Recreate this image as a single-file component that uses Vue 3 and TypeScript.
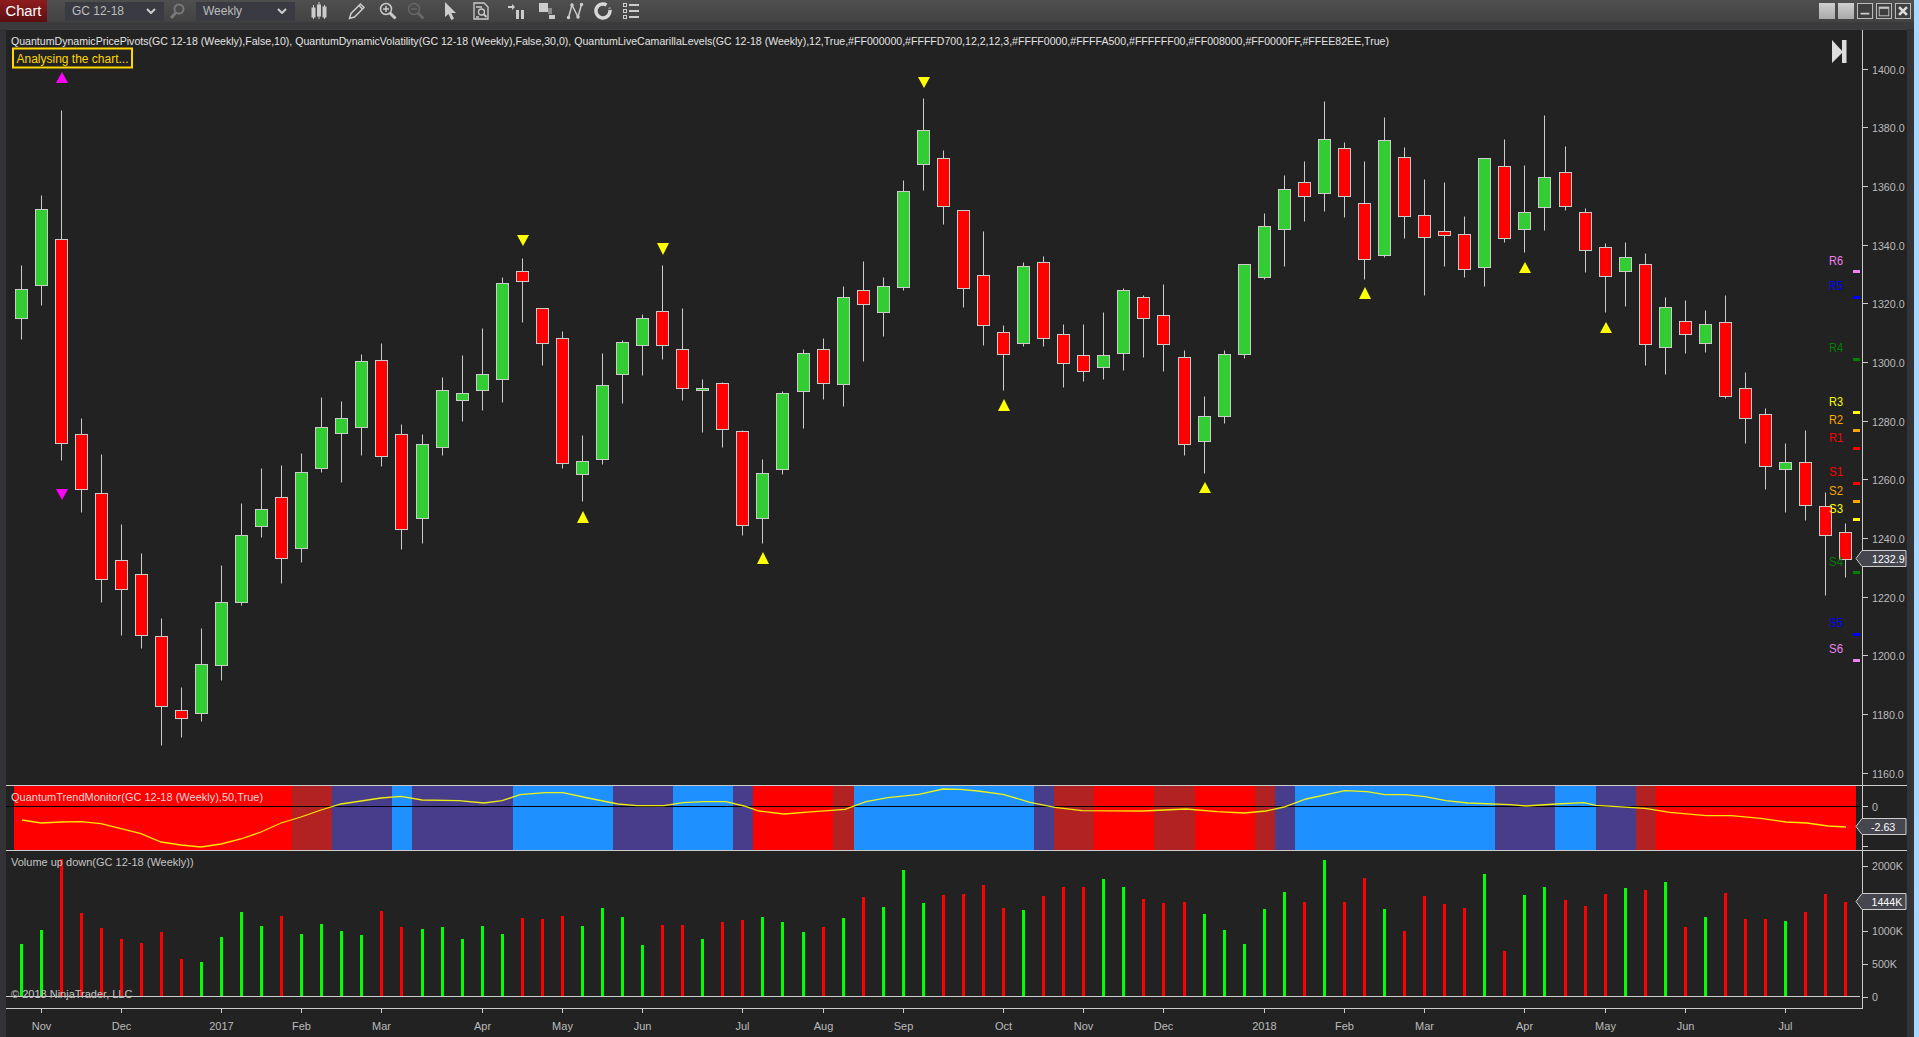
<script setup lang="ts">
type Reading = [number, number, number, number, "G" | "R"];

const slotGaps = [20, 39, 58, 77];
const slotX = (i: number) => 21.5 + 20 * i + slotGaps.filter((g) => i >= g).length;
const snap = (v: number) => Math.round(v) + 0.5;

// candle rows were read off crops of the chart: screen y = top + v / scale
function fromCrop(rows: Reading[], top: number, scale: number) {
    return rows.map(([wt, bt, bb, wb, dir]) => ({
        wickTop: snap(top + wt / scale),
        bodyTop: snap(top + bt / scale),
        bodyBottom: snap(top + bb / scale),
        wickBottom: snap(top + wb / scale),
        dir,
    }));
}

const candles = [
    ...fromCrop([
        [459, 514, 579, 625, "G"], [302, 333, 505, 549, "G"], [112, 400, 859, 897, "R"], [802, 837, 962, 1012, "R"],
        [883, 971, 1162, 1214, "R"], [1039, 1121, 1184, 1288, "R"], [1104, 1152, 1287, 1317, "R"], [1250, 1291, 1448, 1534, "R"],
        [1404, 1457, 1473, 1516, "R"], [1272, 1354, 1462, 1481, "G"], [1131, 1213, 1356, 1389, "G"], [992, 1063, 1215, 1221, "G"],
        [914, 1005, 1043, 1068, "G"], [907, 978, 1115, 1172, "R"], [880, 922, 1092, 1124, "G"], [755, 823, 915, 923, "G"],
        [764, 803, 835, 945, "G"], [659, 675, 821, 885, "G"], [634, 673, 886, 909, "R"], [815, 837, 1050, 1095, "R"],
        [838, 861, 1027, 1082, "G"], [710, 740, 868, 885, "G"], [661, 745, 761, 809, "G"],
    ], 60, 2.24),
    ...fromCrop([
        [778, 913, 959, 1016, "G"], [630, 649, 927, 993, "G"], [575, 614, 643, 761, "R"], [721, 721, 821, 886, "R"],
        [787, 808, 1171, 1185, "R"], [1089, 1165, 1203, 1281, "G"], [851, 945, 1160, 1173, "G"], [813, 820, 913, 996, "G"],
        [738, 750, 829, 915, "G"], [595, 730, 827, 868, "R"], [720, 840, 953, 987, "R"], [926, 953, 959, 1080, "G"],
        [935, 939, 1072, 1124, "R"], [1074, 1078, 1351, 1379, "R"], [1159, 1200, 1331, 1402, "G"], [961, 968, 1189, 1202, "G"],
        [839, 852, 962, 1069, "G"], [807, 840, 939, 984, "R"], [656, 689, 942, 1005, "G"], [584, 669, 710, 874, "R"],
        [630, 657, 733, 801, "G"], [348, 381, 660, 668, "G"], [110, 204, 303, 377, "G"], [261, 286, 425, 476, "R"],
    ], 60, 2.904),
    ...fromCrop([
        [451, 451, 683, 741, "R"], [513, 646, 794, 855, "R"], [795, 817, 881, 990, "R"], [605, 619, 848, 858, "G"],
        [588, 607, 833, 858, "R"], [792, 823, 908, 981, "R"], [792, 886, 932, 963, "R"], [756, 886, 920, 957, "G"],
        [685, 691, 878, 930, "G"], [705, 712, 773, 891, "R"], [672, 766, 851, 933, "R"], [870, 892, 1151, 1185, "R"],
        [1008, 1069, 1142, 1239, "G"], [870, 883, 1067, 1089, "G"], [613, 613, 881, 894, "G"], [459, 499, 650, 657, "G"],
        [345, 388, 506, 618, "G"], [303, 367, 407, 483, "R"], [123, 238, 398, 453, "G"], [246, 265, 407, 471, "R"],
        [303, 430, 596, 657, "R"], [171, 241, 584, 591, "G"], [261, 292, 467, 534, "R"], [357, 466, 530, 705, "R"],
    ], 60, 3),
    ...fromCrop([
        [296, 439, 449, 540, "R"], [395, 448, 548, 572, "R"], [227, 227, 542, 598, "G"], [171, 251, 458, 470, "R"],
        [247, 384, 432, 499, "G"], [102, 283, 368, 436, "G"], [192, 268, 365, 377, "R"], [372, 384, 493, 558, "R"],
        [473, 486, 568, 674, "R"], [470, 515, 554, 656, "G"], [502, 535, 766, 828, "R"], [630, 660, 774, 854, "G"],
        [639, 701, 739, 793, "R"], [668, 710, 763, 790, "G"], [624, 704, 917, 923, "R"], [848, 895, 983, 1054, "R"],
        [952, 971, 1120, 1188, "R"], [1054, 1110, 1131, 1254, "G"], [1016, 1110, 1233, 1278, "R"], [1197, 1236, 1320, 1495, "R"],
        [1287, 1313, 1390, 1443, "R"],
    ], 80, 2.904),
].map((c, i) => ({ ...c, x: slotX(i) }));

const priceTicks = [1400, 1380, 1360, 1340, 1320, 1300, 1280, 1260, 1240, 1220, 1200, 1180, 1160].map((p) => ({
    label: p.toFixed(1),
    y: snap(68.6 + ((1400 - p) / 20) * 58.67),
}));

const pivots = [
    { name: "R6", color: "#ee82ee", labelY: 260, tickY: 271 },
    { name: "R5", color: "#0000ff", labelY: 285, tickY: 297 },
    { name: "R4", color: "#008000", labelY: 347, tickY: 359 },
    { name: "R3", color: "#ffff00", labelY: 401, tickY: 412 },
    { name: "R2", color: "#ffa500", labelY: 419, tickY: 430 },
    { name: "R1", color: "#ff0000", labelY: 437, tickY: 448 },
    { name: "S1", color: "#ff0000", labelY: 471, tickY: 483 },
    { name: "S2", color: "#ffa500", labelY: 490, tickY: 501 },
    { name: "S3", color: "#ffff00", labelY: 508, tickY: 519 },
    { name: "S4", color: "#008000", labelY: 561, tickY: 572 },
    { name: "S5", color: "#0000ff", labelY: 622, tickY: 634 },
    { name: "S6", color: "#ee82ee", labelY: 648, tickY: 660 },
];

const triangle = (x: number, top: number, bottom: number, up: boolean) =>
    up ? `${x - 6},${bottom} ${x + 6},${bottom} ${x},${top}` : `${x - 6},${top} ${x + 6},${top} ${x},${bottom}`;

const markers = [
    { color: "#ff00ff", points: triangle(62, 72, 83, true) },
    { color: "#ff00ff", points: triangle(62, 489, 500, false) },
    { color: "#ffff00", points: triangle(523, 235, 246, false) },
    { color: "#ffff00", points: triangle(663, 243, 255, false) },
    { color: "#ffff00", points: triangle(924, 77, 88, false) },
    { color: "#ffff00", points: triangle(583, 511, 523, true) },
    { color: "#ffff00", points: triangle(763, 552, 564, true) },
    { color: "#ffff00", points: triangle(1004, 399, 411, true) },
    { color: "#ffff00", points: triangle(1205, 482, 493, true) },
    { color: "#ffff00", points: triangle(1365, 287, 299, true) },
    { color: "#ffff00", points: triangle(1525, 262, 273, true) },
    { color: "#ffff00", points: triangle(1606, 322, 333, true) },
];

const RED = "#ff0000";
const BRICK = "#b22222";
const SLATE = "#483d8b";
const BLUE = "#1e90ff";
const trendStops: [number, string][] = [
    [14, RED], [292, BRICK], [332, SLATE], [392, BLUE], [412, SLATE], [513, BLUE], [613, SLATE], [673, BLUE],
    [733, SLATE], [753, RED], [833, BRICK], [854, BLUE], [1034, SLATE], [1054, BRICK], [1094, RED], [1154, BRICK],
    [1195, RED], [1255, BRICK], [1275, SLATE], [1295, BLUE], [1495, SLATE], [1555, BLUE], [1596, SLATE], [1636, BRICK],
    [1656, RED],
];
const trendBands = trendStops.map(([x, color], i) => ({
    x,
    color,
    width: (trendStops[i + 1]?.[0] ?? 1856) - x,
}));

const trendLine = [
    [22, 820], [41, 823], [61, 822], [81, 821.7], [101, 823.7], [121, 828.7], [141, 833.7], [161, 842], [181, 845],
    [201, 847], [221, 844], [241, 839], [261, 832], [281, 823], [301, 817], [321, 810], [341, 804], [361, 801],
    [381, 798], [401, 796.3], [422, 800], [459, 800.7], [484, 803], [502, 800.7], [520, 794.7], [545, 792.7],
    [563, 792.7], [588, 798], [618, 804], [637, 805.7], [664, 805.7], [683, 802.7], [704, 801.7], [726, 801.7],
    [744, 806], [759, 811], [784, 814], [814, 811.7], [845, 809.3], [866, 801.7], [888, 797.7], [919, 794.3],
    [943, 789], [960, 789.3], [978, 791], [1003, 794.3], [1030, 802.3], [1055, 807.3], [1082, 810.7], [1143, 811],
    [1186, 809], [1217, 811.7], [1244, 813], [1266, 811], [1284, 807], [1306, 799], [1345, 790.7], [1367, 791.7],
    [1385, 794.7], [1406, 794.7], [1425, 796.7], [1446, 800.7], [1468, 803], [1510, 804.7], [1526, 806], [1556, 804],
    [1584, 802.7], [1596, 805.3], [1617, 806.7], [1645, 808.3], [1670, 812.3], [1706, 815.7], [1731, 815.7],
    [1761, 818.3], [1786, 822], [1807, 823], [1828, 826], [1846, 827],
].map(([x, y]) => `${x},${y}`).join(" ");

const volumeTops = [
    944, 930, 859, 913, 928, 939, 943, 932, 959, 962, 937, 912, 926, 916, 934, 924, 931, 935, 911, 927, 929, 927, 939, 926,
    934, 918, 919, 916, 926, 908, 917, 945, 925, 925, 939, 922, 920, 917, 922, 932, 927, 918, 897, 907,
    870, 903, 895, 894, 885, 908, 910, 896, 887, 887, 879, 887, 899, 903, 902, 914, 930, 944, 909, 892,
    902, 860, 902, 878, 909, 931, 896, 904, 908, 874, 951, 895, 887, 900, 906, 894,
    888, 890, 882, 927, 917, 893, 919, 919, 921, 912, 894, 902,
];
const volumeDirs =
    "GGRRRRRRRGGGGRGGGGRRGGGG" + "GRRRGGGGRR" + "GRRGGGRGRG" + "GGRRRRGRRR" + "GGRRRGGGGG" + "RGRRGRRRRG" + "RGGRRR" + "GRGRGRRRGRRR";
const volumeBars = volumeTops.map((top, i) => ({
    x: slotX(i) - 1.5,
    y: top,
    height: 997 - top,
    color: volumeDirs[i] === "G" ? "#00ff00" : "#ff0000",
}));
const volumeTicks = [
    { label: "2000K", y: 866 },
    { label: "1000K", y: 931 },
    { label: "500K", y: 964 },
    { label: "0", y: 997 },
];

const months = [
    ["Nov", 41.5], ["Dec", 121.5], ["2017", 221.5], ["Feb", 301.5], ["Mar", 381.5], ["Apr", 482.5], ["May", 562.5],
    ["Jun", 642.5], ["Jul", 742.5], ["Aug", 823.5], ["Sep", 903.5], ["Oct", 1003.5], ["Nov", 1083.5], ["Dec", 1163.5],
    ["2018", 1264.5], ["Feb", 1344.5], ["Mar", 1424.5], ["Apr", 1524.5], ["May", 1605.5], ["Jun", 1685.5], ["Jul", 1785.5],
] as [string, number][];

const flagPath = (top: number, bottom: number) => {
    const mid = (top + bottom) / 2;
    return `M1906 ${top} H1862 L1856 ${mid} L1862 ${bottom} H1906 Z`;
};
const legend =
    "QuantumDynamicPricePivots(GC 12-18 (Weekly),False,10), QuantumDynamicVolatility(GC 12-18 (Weekly),False,30,0), QuantumLiveCamarillaLevels(GC 12-18 (Weekly),12,True,#FF000000,#FFFFD700,12,2,12,3,#FFFF0000,#FFFFA500,#FFFFFF00,#FF008000,#FF0000FF,#FFEE82EE,True)";
</script>

<template>
    <div class="app">
        <div class="window">
            <header class="toolbar">
                <div class="tab">Chart</div>
                <div class="select select--instrument">
                    <span>GC 12-18</span>
                    <svg class="chev" viewBox="0 0 10 6"><polyline points="1 1 5 5 9 1" /></svg>
                </div>
                <svg class="tool t-find" viewBox="0 0 18 18" fill="none" stroke="#777" stroke-width="2">
                    <circle cx="11" cy="7" r="4.5" /><path d="M8 10.5 3 16" stroke-width="3" />
                </svg>
                <div class="select select--period">
                    <span>Weekly</span>
                    <svg class="chev" viewBox="0 0 10 6"><polyline points="1 1 5 5 9 1" /></svg>
                </div>
                <svg class="tool t-candles" viewBox="0 0 18 18" fill="#ccc" stroke="#ccc">
                    <path d="M3.5 3v14M9 0v17M14.5 3v14" stroke-width="1" />
                    <rect x="2" y="6" width="3" height="9" /><rect x="7.5" y="3" width="3" height="11" /><rect x="13" y="5" width="3" height="10" />
                </svg>
                <svg class="tool t-pencil" viewBox="0 0 18 18" fill="none" stroke="#ccc" stroke-width="1.5">
                    <path d="M1.5 16.5 3 11.5 12.5 2 16 5.5 6.5 15Z" /><path d="M11 3.5 14.5 7" />
                </svg>
                <svg class="tool t-zoomin" viewBox="0 0 18 18" fill="none" stroke="#ccc" stroke-width="1.5">
                    <circle cx="7" cy="7" r="5.5" /><path d="M4 7h6M7 4v6" /><path d="M11 11l5.5 5.5" stroke-width="3" />
                </svg>
                <svg class="tool t-zoomout" viewBox="0 0 18 18" fill="none" stroke="#666" stroke-width="1.5">
                    <circle cx="7" cy="7" r="5.5" /><path d="M4 7h6" /><path d="M11 11l5.5 5.5" stroke-width="3" />
                </svg>
                <svg class="tool t-cursor" viewBox="0 0 18 18" fill="#ccc">
                    <path d="M4 0v15l3.5-3 2.800 6 2.700-1.200-2.700-5.800H15Z" />
                </svg>
                <svg class="tool t-report" viewBox="0 0 18 18" fill="none" stroke="#ccc" stroke-width="1.3">
                    <path d="M2 1h10l4 4v12H2Z" /><path d="M4 5h6M4 15h3" /><circle cx="9.5" cy="10" r="3" /><path d="M12 12.5l2.5 2.500" stroke-width="2" />
                </svg>
                <svg class="tool t-bars" viewBox="0 0 18 18" fill="#ccc">
                    <path d="M1 4h4V2l3 3-3 3V6H1Z" /><rect x="9" y="8" width="3" height="9" /><rect x="14" y="8" width="3" height="9" />
                </svg>
                <svg class="tool t-squares" viewBox="0 0 18 18" fill="#ccc">
                    <rect x="1" y="1" width="9" height="9" /><rect x="10" y="6" width="4" height="6" fill="#888" /><rect x="11" y="13" width="6" height="4" />
                </svg>
                <svg class="tool t-path" viewBox="0 0 18 18" fill="#ccc" stroke="#ccc" stroke-width="1.5">
                    <path d="M2.500 15.500 6 3l6 12 3.500-12.500" fill="none" /><circle cx="2.500" cy="15.500" r="1" /><circle cx="6" cy="3" r="1" /><circle cx="12" cy="15" r="1" /><circle cx="15.500" cy="2.500" r="1" />
                </svg>
                <svg class="tool t-refresh" viewBox="0 0 18 18" fill="none" stroke="#d8d8d8" stroke-width="3.5">
                    <path d="M12.500 2.900A7 7 0 1 0 15.900 8" /><path d="M15 5.500A7 7 0 0 1 15.900 7" stroke="#888" stroke-width="2.500" />
                </svg>
                <svg class="tool t-list" viewBox="0 0 18 18" fill="none" stroke="#ccc">
                    <rect x="1.500" y="1.500" width="3" height="3" /><rect x="1.500" y="7.500" width="3" height="3" /><rect x="1.500" y="13.500" width="3" height="3" />
                    <path d="M7 3h10M7 9h10M7 15h10" stroke-width="2" />
                </svg>
                <div class="win-buttons">
                    <span class="win win--solid"></span>
                    <span class="win win--solid"></span>
                    <span class="win"><svg viewBox="0 0 16 16"><path d="M3 11h10" stroke="#ccc" stroke-width="2" /></svg></span>
                    <span class="win"><svg viewBox="0 0 16 16" fill="none" stroke="#ccc"><rect x="2.500" y="3.500" width="11" height="10" /><path d="M2.500 4.500h11" stroke-width="2" /></svg></span>
                    <span class="win"><svg viewBox="0 0 16 16"><path d="M3.500 3.500l9 9M12.500 3.500l-9 9" stroke="#ddd" stroke-width="3" /></svg></span>
                </div>
            </header>

            <main class="chart">
                <svg class="pane pane--price" viewBox="6 30 1901 755">
                    <text class="legend" x="11" y="45" textLength="1378" lengthAdjust="spacingAndGlyphs">{{ legend }}</text>
                    <rect class="status-box" x="13" y="48.5" width="119" height="19" />
                    <text class="status" x="16.5" y="63" textLength="112" lengthAdjust="spacingAndGlyphs">Analysing the chart...</text>
                    <path d="M1832 40 L1843 52 L1832 63Z" fill="#ddd" />
                    <rect x="1842" y="40" width="4.5" height="23" fill="#ddd" />

                    <g v-for="(c, i) in candles" :key="i">
                        <path class="wick" :d="`M${c.x} ${c.wickTop}V${c.wickBottom}`" />
                        <rect
                            class="body"
                            :x="c.x - 6"
                            :y="c.bodyTop"
                            width="12"
                            :height="c.bodyBottom - c.bodyTop"
                            :fill="c.dir === 'G' ? '#32cd32' : '#ff0000'"
                        />
                    </g>
                    <polygon v-for="(m, i) in markers" :key="i" :points="m.points" :fill="m.color" />

                    <g v-for="p in pivots" :key="p.name">
                        <text class="pivot" x="1829" :y="p.labelY + 4.5" :fill="p.color" textLength="14" lengthAdjust="spacingAndGlyphs">{{ p.name }}</text>
                        <rect x="1853" :y="p.tickY - 1" width="7" height="3" :fill="p.color" />
                    </g>

                    <path class="axis" d="M1862.5 30V785" />
                    <g v-for="t in priceTicks" :key="t.label">
                        <path class="axis" :d="`M1863 ${t.y}H1868`" />
                        <text class="tick" x="1872" :y="t.y + 4">{{ t.label }}</text>
                    </g>
                    <path class="flag" :d="flagPath(550.5, 566.5)" />
                    <text class="flag-text" x="1872" y="562.5">1232.9</text>
                </svg>

                <svg class="pane pane--trend" viewBox="6 786 1901 64">
                    <rect v-for="(b, i) in trendBands" :key="i" :x="b.x" y="786" :width="b.width" height="64" :fill="b.color" shape-rendering="crispEdges" />
                    <path d="M6 806.5H1860" stroke="#000" fill="none" />
                    <polyline class="trend-line" :points="trendLine" />
                    <text class="caption caption--light" x="11" y="801">QuantumTrendMonitor(GC 12-18 (Weekly),50,True)</text>
                    <path class="axis" d="M1862.5 786V850M1863 806.5H1868M1863 846.5H1868" />
                    <text class="tick" x="1872" y="810.5">0</text>
                    <path class="flag" :d="flagPath(818.5, 834.5)" />
                    <text class="flag-text" x="1871" y="830.5">-2.63</text>
                </svg>

                <svg class="pane pane--volume" viewBox="6 851 1901 157">
                    <rect v-for="(b, i) in volumeBars" :key="i" :x="b.x" :y="b.y" width="3" :height="b.height" :fill="b.color" shape-rendering="crispEdges" />
                    <path class="axis" d="M6 996.5H1860M1862.5 851V1008" />
                    <text class="caption" x="11" y="866">Volume up down(GC 12-18 (Weekly))</text>
                    <text class="caption" x="11" y="998">© 2018 NinjaTrader, LLC</text>
                    <g v-for="t in volumeTicks" :key="t.label">
                        <path class="axis" :d="`M1863 ${t.y + 0.5}H1868`" />
                        <text class="tick" x="1872" :y="t.y + 4">{{ t.label }}</text>
                    </g>
                    <path class="flag" :d="flagPath(893.5, 909.5)" />
                    <text class="flag-text" x="1871.5" y="905.5">1444K</text>
                </svg>

                <svg class="pane pane--time" viewBox="6 1008 1901 29">
                    <path class="axis" d="M6 1008.5H1863" />
                    <g v-for="([label, x], i) in months" :key="i">
                        <path class="axis" :d="`M${x} 1009V1013`" />
                        <text class="tick tick--month" :x="x" y="1030">{{ label }}</text>
                    </g>
                </svg>
            </main>
        </div>
        <div class="edge"></div>
    </div>
</template>

<style scoped>
.app{
    display: flex;
    width: 1919px;
    height: 1037px;
    overflow: hidden;
    font-family: "Liberation Sans", Arial, sans-serif;
}

.window{
    flex: 1;
    display: flex;
    flex-direction: column;
    background: #333337;
    min-width: 0;
}

.edge{
    width: 5px;
    background: #abd8ff;
}

.toolbar{
    display: flex;
    align-items: center;
    height: 22px;
    padding-bottom: 7px;
    flex-shrink: 0;
    background: linear-gradient(#4f4f4f, #424242 22px, #3b3b3d 22px);
}

.tab{
    width: 47px;
    height: 22px;
    line-height: 23px;
    text-align: center;
    color: #fff;
    font-size: 14.7px;
    background: linear-gradient(#8f1c1f, #5b0f12);
}

.select{
    display: flex;
    align-items: center;
    justify-content: space-between;
    box-sizing: border-box;
    width: 99px;
    height: 19px;
    padding: 0 8px 0 7px;
    background: #3a3a42;
    color: #bdbdbd;
    font-size: 12px;
}

.select--instrument{
    margin-left: 18px;
}

.select--period{
    margin-left: 10px;
}

.chev{
    width: 10px;
    height: 6px;
    fill: none;
    stroke: #ccc;
    stroke-width: 2;
}

.tool{
    width: 18px;
    height: 18px;
    flex-shrink: 0;
}

.t-find{ margin-left: 4px; }
.t-candles{ margin-left: 15px; }
.t-pencil{ margin-left: 20px; }
.t-zoomin{ margin-left: 13px; }
.t-zoomout{ margin-left: 10px; }
.t-cursor{ margin-left: 16px; }
.t-report{ margin-left: 13px; }
.t-bars{ margin-left: 17px; }
.t-squares{ margin-left: 13px; }
.t-path{ margin-left: 10px; }
.t-refresh{ margin-left: 10px; }
.t-list{ margin-left: 10px; }

.win-buttons{
    margin-left: auto;
    margin-right: 3px;
    display: flex;
    gap: 3px;
}

.win{
    width: 16px;
    height: 16px;
    box-sizing: border-box;
    border: 1px solid #bbb;
    background: #3f3f3f;
}

.win svg{
    display: block;
    width: 14px;
    height: 14px;
}

.win--solid{
    border: none;
    background: linear-gradient(#cfcfcf, #a9a9a9);
}

.chart{
    flex: 1;
    display: flex;
    flex-direction: column;
    margin: 0 7px 0 6px;
    background: #222;
    border-top: 1px solid #3f3f41;
}

.pane{
    display: block;
    width: 1901px;
    flex-shrink: 0;
}

.pane--price{ height: 755px; }
.pane--trend{ height: 64px; border-top: 1px solid #ccc; }
.pane--volume{ height: 157px; border-top: 1px solid #ccc; }
.pane--time{ height: 29px; }

.legend{
    font-size: 11px;
    fill: #e4e4e4;
}

.status-box{
    fill: none;
    stroke: #ffd700;
    stroke-width: 2;
}

.status{
    font-size: 12px;
    fill: #ffd700;
}

.wick{
    stroke: #ccc;
    fill: none;
}

.body{
    stroke: #ccc;
}

.pivot{
    font-size: 13px;
}

.axis{
    stroke: #ccc;
    fill: none;
}

.tick{
    font-size: 10.67px;
    fill: #bbb;
}

.tick--month{
    font-size: 11px;
    text-anchor: middle;
}

.flag{
    fill: #46464f;
    stroke: #ccc;
}

.flag-text{
    font-size: 10.67px;
    fill: #fff;
}

.trend-line{
    fill: none;
    stroke: #ffff00;
    stroke-width: 1.3;
    stroke-opacity: 0.9;
}

.caption{
    font-size: 11px;
    fill: #c4c4c4;
}

.caption--light{
    fill: #e6d8d8;
}
</style>

<style>
html, body{
    margin: 0;
    background: #222;
}
</style>
